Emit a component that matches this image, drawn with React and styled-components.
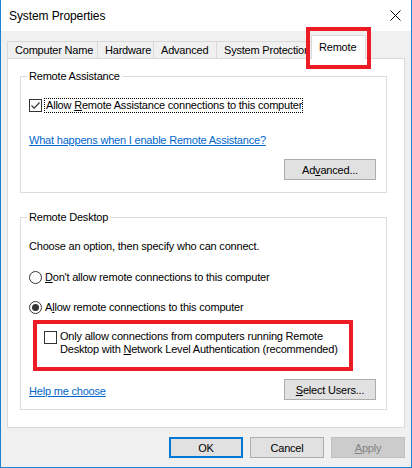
import React from 'react'
import styled, { createGlobalStyle } from 'styled-components'

const GlobalStyle = createGlobalStyle`
  html, body {
    margin: 0;
    padding: 0;
    background: #ffffff;
  }
  body {
    font-family: 'Segoe UI', 'Liberation Sans', Arial, sans-serif;
    font-size: 11px;
    letter-spacing: -0.2px;
    color: #000;
  }
`

const CloseIcon = () => (
  <svg width="11" height="11" viewBox="0 0 11 11">
    <path d="M0.5 0.5 L10.5 10.5 M10.5 0.5 L0.5 10.5" stroke="#000" strokeWidth="1" fill="none" />
  </svg>
)

const CheckMark = () => (
  <svg width="11" height="11" viewBox="0 0 11 11">
    <path d="M1.5 5.5 L4.2 8.2 L9.5 2.5" stroke="#333" strokeWidth="1.2" fill="none" />
  </svg>
)

const App = () => (
  <>
    <GlobalStyle />
    <Window>
      <TitleBar>
        <Title>System Properties</Title>
        <CloseButton><CloseIcon /></CloseButton>
      </TitleBar>
      <Body>
        <TabRow>
          <Tab w={91}>Computer Name</Tab>
          <Tab w={57}>Hardware</Tab>
          <Tab w={64}>Advanced</Tab>
          <Tab w={98}>System Protection</Tab>
          <Tab w={55} selected>Remote</Tab>
        </TabRow>
        <TabMarker />
        <Panel>
          <Group>
            <Legend>Remote Assistance</Legend>
            <CheckRow mt={15}>
              <CheckBox><CheckMark /></CheckBox>
              <FocusLabel>Allow <u>R</u>emote Assistance connections to this computer</FocusLabel>
            </CheckRow>
            <Link mt={20}>What happens when I enable Remote Assistance?</Link>
            <ButtonRow mt={12}>
              <Button w={92}>Ad<u>v</u>anced...</Button>
            </ButtonRow>
          </Group>

          <Group mt={17} pb={9}>
            <Legend>Remote Desktop</Legend>
            <Text mt={15}>Choose an option, then specify who can connect.</Text>
            <RadioRow mt={17}>
              <Radio />
              <span><u>D</u>on't allow remote connections to this computer</span>
            </RadioRow>
            <RadioRow mt={16}>
              <Radio checked />
              <span>A<u>l</u>low remote connections to this computer</span>
            </RadioRow>
            <Highlight>
              <CheckBox top={1} />
              <WrapText>
                Only allow connections from computers running Remote<br />
                Desktop with <u>N</u>etwork Level Authentication (recommended)
              </WrapText>
            </Highlight>
            <SplitRow>
              <Link>Help me choose</Link>
              <Button w={92}><u>S</u>elect Users...</Button>
            </SplitRow>
          </Group>
        </Panel>
        <Footer>
          <Button w={74} primary>OK</Button>
          <Button w={74}>Cancel</Button>
          <Button w={74} disabled><u>A</u>pply</Button>
        </Footer>
      </Body>
    </Window>
  </>
)

const Window = styled.div`
  position: relative;
  width: 412px;
  height: 468px;
  box-sizing: border-box;
  border: 1px solid #1883d7;
  border-top: none;
  background: #f0f0f0;
  display: flex;
  flex-direction: column;
`

const TitleBar = styled.div`
  height: 31px;
  flex-shrink: 0;
  background: #ffffff;
  display: flex;
  align-items: center;
  justify-content: space-between;
  padding: 0 8px 0 8px;
`

const Title = styled.div`
  font-size: 12px;
  letter-spacing: -0.1px;
  padding-top: 1px;
`

const CloseButton = styled.div`
  width: 14px;
  height: 14px;
  display: flex;
  align-items: center;
  justify-content: center;
  margin-right: 1px;
`

const Body = styled.div`
  flex: 1;
  display: flex;
  flex-direction: column;
  padding: 4px 6px 0 6px;
`

const TabRow = styled.div`
  display: flex;
  align-items: flex-end;
  height: 24px;
  position: relative;
  z-index: 1;
  margin-bottom: -1px;
`

const Tab = styled.div`
  width: ${p => p.w}px;
  height: ${p => (p.selected ? 24 : 18)}px;
  box-sizing: border-box;
  margin-left: ${p => (p.selected ? -3 : -1)}px;
  margin-right: ${p => (p.selected ? -2 : 0)}px;
  &:first-child {
    margin-left: 0;
  }
  border: 1px solid #d9d9d9;
  border-bottom: ${p => (p.selected ? 'none' : '1px solid #d9d9d9')};
  background: ${p => (p.selected ? '#ffffff' : '#f0f0f0')};
  padding: ${p => (p.selected ? '4px 0 0 7px' : '1px 0 0 7px')};
  line-height: 14px;
  white-space: nowrap;
  overflow: hidden;
  position: relative;
  z-index: ${p => (p.selected ? 2 : 0)};
`

const TabMarker = styled.div`
  position: absolute;
  left: 305px;
  top: 27px;
  width: 65px;
  height: 42px;
  box-sizing: border-box;
  border: 4px solid #ed1c24;
  z-index: 5;
`

const Panel = styled.div`
  background: #ffffff;
  border: 1px solid #d9d9d9;
  padding: 10px 0 17px 12px;
  display: flex;
  flex-direction: column;
  align-items: flex-start;
`

const Group = styled.fieldset`
  width: 367px;
  box-sizing: border-box;
  margin: ${p => p.mt || 0}px 0 0 0;
  padding: 0 10px ${p => (p.pb !== undefined ? p.pb : 12)}px 8px;
  border: 1px solid #dcdcdc;
  display: flex;
  flex-direction: column;
  align-items: flex-start;
`

const Legend = styled.legend`
  padding: 0 2px;
  margin-left: -2px;
  line-height: 14px;
`

const CheckRow = styled.div`
  display: flex;
  align-items: center;
  margin-top: ${p => p.mt || 0}px;
`

const CheckBox = styled.div`
  width: 13px;
  height: 13px;
  box-sizing: border-box;
  border: 1px solid #333333;
  background: #ffffff;
  display: flex;
  align-items: center;
  justify-content: center;
  flex-shrink: 0;
  margin-top: ${p => p.top || 0}px;
`

const FocusLabel = styled.span`
  margin-left: 2px;
  padding: 0 0 0 1px;
  border: 1px dotted #000;
  line-height: 13px;
`

const Link = styled.a`
  color: #0066cc;
  text-decoration: underline;
  line-height: 14px;
  margin-top: ${p => p.mt || 0}px;
  cursor: pointer;
`

const ButtonRow = styled.div`
  align-self: stretch;
  display: flex;
  justify-content: flex-end;
  margin-top: ${p => p.mt || 0}px;
`

const Button = styled.div`
  width: ${p => p.w}px;
  height: 21px;
  box-sizing: border-box;
  display: flex;
  align-items: center;
  justify-content: center;
  background: ${p => (p.disabled ? '#cccccc' : '#e1e1e1')};
  border: ${p => (p.primary ? '2px solid #0078d7' : p.disabled ? '1px solid #bfbfbf' : '1px solid #adadad')};
  color: ${p => (p.disabled ? '#838383' : '#000')};
`

const Text = styled.div`
  line-height: 14px;
  margin-top: ${p => p.mt || 0}px;
`

const RadioRow = styled.div`
  display: flex;
  align-items: center;
  gap: 3px;
  line-height: 14px;
  margin-top: ${p => p.mt || 0}px;
`

const Radio = styled.div`
  width: 13px;
  height: 13px;
  box-sizing: border-box;
  border: 1px solid #333333;
  border-radius: 50%;
  background: #ffffff;
  display: flex;
  align-items: center;
  justify-content: center;
  &::after {
    content: '';
    display: ${p => (p.checked ? 'block' : 'none')};
    width: 7px;
    height: 7px;
    border-radius: 50%;
    background: #333333;
  }
`

const Highlight = styled.div`
  display: flex;
  align-items: flex-start;
  gap: 3px;
  margin: 6px 0 0 4px;
  width: 320px;
  box-sizing: border-box;
  border: 4px solid #ed1c24;
  padding: 6px 0 11px 7px;
`

const WrapText = styled.div`
  line-height: 13px;
`

const SplitRow = styled.div`
  align-self: stretch;
  display: flex;
  justify-content: space-between;
  align-items: center;
  margin-top: 8px;
  & > a {
    padding-top: 3px;
  }
`

const Footer = styled.div`
  display: flex;
  justify-content: flex-end;
  gap: 7px;
  margin-top: 9px;
`

export default App
